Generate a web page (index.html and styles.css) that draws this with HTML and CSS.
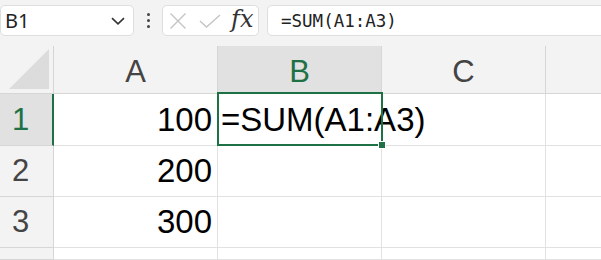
FILE: index.html
```html
<!DOCTYPE html>
<html>
<head>
<meta charset="utf-8">
<link rel="stylesheet" href="styles.css">
</head>
<body>
<div class="toolbar">
  <div class="namebox">
    <span class="name">B1</span>
    <svg class="chev" width="14" height="8" viewBox="0 0 14 8"><path d="M1 1.2 L7 6.8 L13 1.2" fill="none" stroke="#333" stroke-width="1.6"/></svg>
  </div>
  <div class="dots"><i></i><i></i><i></i></div>
  <div class="fxbox">
    <svg class="ico" width="18" height="18" viewBox="0 0 18 18"><path d="M1.5 1.5 L16.5 16.5 M16.5 1.5 L1.5 16.5" stroke="#c4c4c4" stroke-width="1.4" fill="none"/></svg>
    <svg class="ico" width="22" height="14" viewBox="0 0 22 14"><path d="M1 7 L7.5 13 L21 1" stroke="#c4c4c4" stroke-width="1.4" fill="none"/></svg>
    <span class="fx">fx</span>
  </div>
  <div class="formula">=SUM(A1:A3)</div>
</div>
<div class="sheet">
  <div class="corner"><svg width="40" height="40" viewBox="0 0 40 40"><path d="M40 0 L40 40 L0 40 Z" fill="#dcdcdc"/></svg></div>
  <div class="colhead">A</div>
  <div class="colhead active">B</div>
  <div class="colhead">C</div>
  <div class="colhead last"></div>

  <div class="rowhead active">1</div>
  <div class="cell num">100</div>
  <div class="cell edit">=SUM(A1:A3)<div class="sel"><span class="handle"></span></div></div>
  <div class="cell"></div>
  <div class="cell last"></div>

  <div class="rowhead">2</div>
  <div class="cell num">200</div>
  <div class="cell"></div>
  <div class="cell"></div>
  <div class="cell last"></div>

  <div class="rowhead">3</div>
  <div class="cell num">300</div>
  <div class="cell"></div>
  <div class="cell"></div>
  <div class="cell last"></div>

  <div class="rowhead"></div>
  <div class="cell"></div>
  <div class="cell"></div>
  <div class="cell"></div>
  <div class="cell last"></div>
</div>
</body>
</html>
```
FILE: styles.css
```css
* { box-sizing: border-box; }
html, body { margin: 0; padding: 0; }
body {
  width: 601px;
  height: 260px;
  overflow: hidden;
  background: #ffffff;
  font-family: "Liberation Sans", Arial, sans-serif;
}
.toolbar {
  height: 46px;
  background: #f3f3f3;
  display: flex;
  align-items: flex-start;
  padding-top: 5px;
}
.namebox {
  width: 134px;
  height: 31px;
  background: #fff;
  border: 1px solid #dedede;
  border-radius: 5px;
  display: flex;
  align-items: center;
  justify-content: space-between;
  padding: 0 8px 0 4px;
}
.name {
  font-family: "Noto Sans", "Open Sans", sans-serif;
  font-size: 20px;
  color: #222;
}
.dots {
  width: 28px;
  height: 31px;
  display: flex;
  flex-direction: column;
  align-items: center;
  justify-content: center;
  gap: 3px;
}
.dots i {
  width: 3px;
  height: 3px;
  background: #444;
  border-radius: 50%;
}
.fxbox {
  width: 97px;
  height: 31px;
  background: #fff;
  border: 1px solid #dedede;
  border-radius: 5px;
  display: flex;
  align-items: center;
  padding-left: 6px;
  gap: 12px;
}
.fx {
  font-family: "DejaVu Serif", "Liberation Serif", serif;
  font-style: italic;
  font-size: 24px;
  color: #333;
  margin-left: -2px;
  margin-top: -4px;
}
.formula {
  flex: 1;
  height: 31px;
  margin-left: 8px;
  margin-right: -6px;
  background: #fff;
  border: 1px solid #dedede;
  border-radius: 5px;
  padding-left: 13px;
  display: flex;
  align-items: center;
  font-family: "DejaVu Sans Mono", "Liberation Mono", monospace;
  font-size: 17.5px;
  color: #222;
}
.sheet {
  display: grid;
  grid-template-columns: 54px 164px 164px 164px 1fr;
  grid-template-rows: 48px 52px 51px 51px 1fr;
  height: 214px;
}
.corner {
  background: #f3f3f3;
  border-right: 1px solid #d6d6d6;
  border-bottom: 1px solid #d6d6d6;
  display: flex;
  align-items: flex-end;
  justify-content: flex-end;
  padding: 0 4px 4px 0;
}
.colhead {
  background: #f3f3f3;
  border-right: 1px solid #d6d6d6;
  border-bottom: 1px solid #d6d6d6;
  display: flex;
  align-items: center;
  justify-content: center;
  font-size: 31px;
  color: #444;
  padding-top: 4px;
}
.colhead.active {
  background: #e1e1e1;
  color: #1e7145;
}
.colhead.last { border-right: none; }
.rowhead {
  background: #f3f3f3;
  border-right: 1px solid #d6d6d6;
  border-bottom: 1px solid #d6d6d6;
  display: flex;
  align-items: center;
  padding-left: 12px;
  font-size: 31px;
  color: #444;
}
.rowhead.active {
  background: #e1e1e1;
  color: #1e7145;
  border-right: 2px solid #1e7145;
}
.cell {
  border-right: 1px solid #e1e1e1;
  border-bottom: 1px solid #e1e1e1;
  display: flex;
  align-items: center;
  font-size: 33px;
  color: #000;
  white-space: nowrap;
}
.cell.last { border-right: none; }
.cell.num {
  justify-content: flex-end;
  padding-right: 5px;
}
.cell.edit {
  position: relative;
  padding-left: 3px;
  overflow: visible;
  z-index: 1;
}
.sel {
  position: absolute;
  left: -1px;
  top: -2px;
  right: -2px;
  bottom: -1px;
  border: 2px solid #1e7145;
  pointer-events: none;
}
.handle {
  position: absolute;
  right: -5px;
  bottom: -5px;
  width: 8px;
  height: 8px;
  background: #1e7145;
  border: 1px solid #fff;
}
```
